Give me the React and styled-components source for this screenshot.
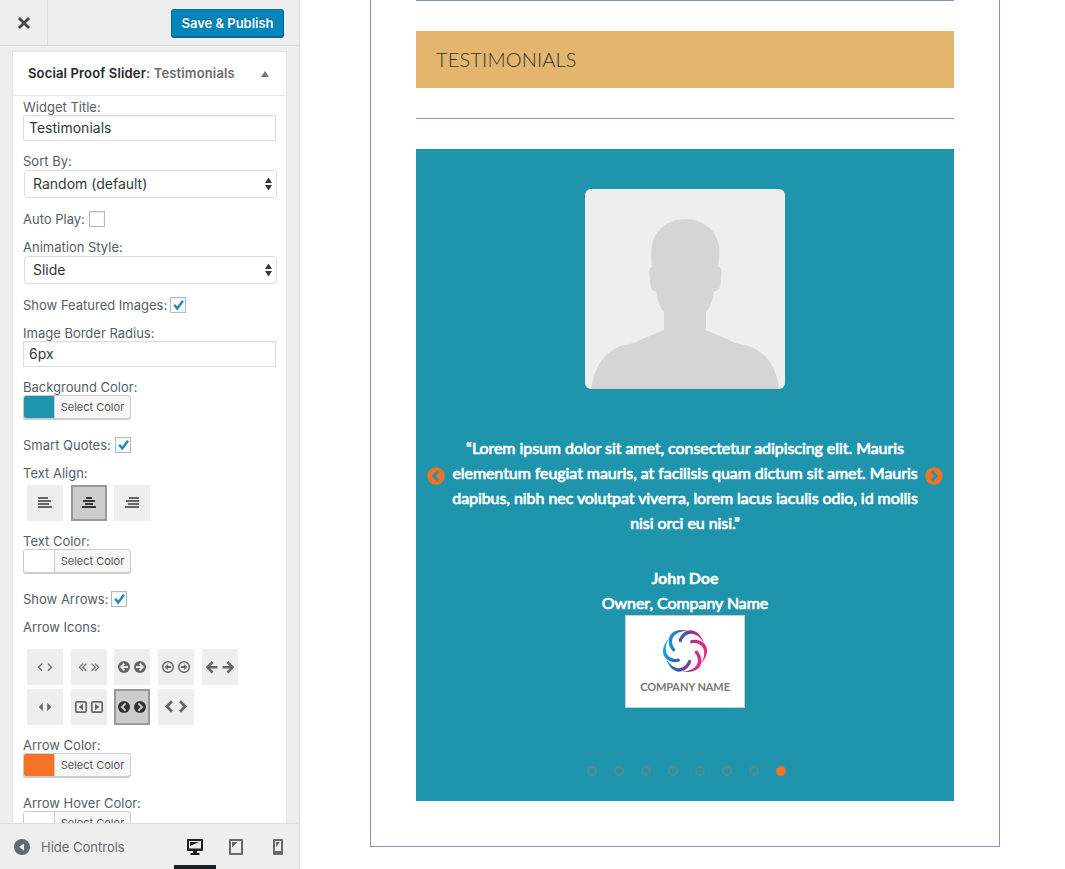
import React from "react";
import styled, { createGlobalStyle, css } from "styled-components";

const Global = createGlobalStyle`
  *, *::before, *::after { box-sizing: border-box; }
  html, body { margin: 0; padding: 0; background: #fff; overflow: hidden; }
  body { font-family: Inter, "Liberation Sans", sans-serif; font-size: 13px; color: #555d66; }
  button { font: inherit; margin: 0; padding: 0; }
`;

const Page = styled.div`
  display: flex;
  width: 1065px;
  height: 869px;
  overflow: hidden;
`;

const Sidebar = styled.aside`
  display: flex;
  flex-direction: column;
  width: 300px;
  height: 869px;
  flex: none;
  background: #eee;
  border-right: 1px solid #ddd;
`;

const Header = styled.header`
  display: flex;
  align-items: center;
  justify-content: space-between;
  height: 46px;
  flex: none;
  border-bottom: 1px solid #ddd;
  padding-right: 15px;
`;

const CloseButton = styled.button`
  display: flex;
  align-items: center;
  justify-content: center;
  width: 48px;
  height: 45px;
  border: 0;
  border-right: 1px solid #ddd;
  background: #eee;
  color: #444;
`;

const SaveButton = styled.button`
  width: 113px;
  height: 29px;
  margin-top: 2px;
  padding-bottom: 1px;
  border: 1px solid #006799;
  border-top-color: #0073aa;
  border-radius: 3px;
  box-shadow: inset 0 -1px 0 #006799;
  background: #0085ba;
  color: #fff;
  font-size: 13px;
  font-weight: 600;
  letter-spacing: -0.03px;
  white-space: nowrap;
  text-shadow: 0 -1px 1px #006799;
`;

const Scroll = styled.div`
  flex: 1;
  min-height: 0;
  overflow: hidden;
  padding: 5px 12px 0;
`;

const Widget = styled.section`
  width: 275px;
  height: 900px;
  background: #fff;
  border: 1px solid #e5e5e5;
`;

const WidgetTitle = styled.h3`
  display: flex;
  align-items: center;
  justify-content: space-between;
  height: 44px;
  margin: 0;
  padding: 0 17px 0 15px;
  border-bottom: 1px solid #e5e5e5;
  color: #23282d;
  font-size: 13px;
  font-weight: 600;
  letter-spacing: 0.15px;
  white-space: nowrap;
  div { padding-bottom: 2px; }
  span { color: #6b6b6b; }
`;

const Fields = styled.div`
  padding: 3px 10px 0;
`;

const Field = styled.div`
  margin-bottom: ${(p) => p.$gap ?? 12}px;
`;

const Label = styled.label`
  display: block;
  height: 16px;
  line-height: 16px;
  white-space: nowrap;
`;

const TextInput = styled.div`
  width: 253px;
  height: 26px;
  padding-left: 5px;
  border: 1px solid #ddd;
  background: #fff;
  box-shadow: inset 0 1px 2px rgba(0, 0, 0, 0.05);
  color: #32373c;
  font-size: 14px;
  line-height: 24px;
`;

const Select = styled.div`
  display: flex;
  align-items: center;
  justify-content: space-between;
  width: 253px;
  height: 28px;
  margin: 1px 0 0 1px;
  padding: 0 4px 0 8px;
  border: 1px solid #ddd;
  border-radius: 4px;
  background: #fff;
  color: #32373c;
  font-size: 14px;
  line-height: 24px;
`;

const CheckRow = styled.div`
  display: flex;
  align-items: center;
  gap: ${(p) => p.$space ?? 4}px;
  height: 16px;
  margin-bottom: 12px;
  white-space: nowrap;
`;

const CheckBox = styled.span`
  display: flex;
  width: 16px;
  height: 16px;
  border: 1px solid #b4b9be;
  background: #fff;
  box-shadow: inset 0 1px 2px rgba(0, 0, 0, 0.08);
`;

const ColorButton = styled.button`
  display: flex;
  width: 108px;
  height: 24px;
  border: 1px solid #ccc;
  border-radius: 3px;
  box-shadow: 0 1px 0 #ccc;
  background: #f7f7f7;
  overflow: hidden;
`;

const Swatch = styled.span`
  flex: none;
  width: 30px;
  height: 22px;
  background: ${(p) => p.$color};
`;

const ColorText = styled.span`
  flex: 1;
  height: 22px;
  border-left: 1px solid #ccc;
  color: #555;
  font-size: 11px;
  line-height: 22px;
  text-align: center;
  white-space: nowrap;
`;

const Tiles = styled.div`
  display: flex;
  flex-wrap: wrap;
  gap: 4px 7.7px;
  padding: ${(p) => p.$top}px 0 0 4px;
`;

const Tile = styled.button`
  display: flex;
  align-items: center;
  justify-content: center;
  width: 36px;
  height: 36px;
  border: 0;
  background: #eee;
  color: #666;
  ${(p) => p.$active && css`
    border: 2px solid #999;
    background: #ccc;
    color: #333;
  `}
  svg { flex: none; }
`;

const Footer = styled.footer`
  display: flex;
  align-items: center;
  height: 46px;
  flex: none;
  border-top: 1px solid #ddd;
  padding-left: 14px;
  color: #656a6f;
`;

const HideText = styled.span`
  flex: 1;
  margin-left: 11px;
  white-space: nowrap;
`;

const Device = styled.button`
  display: flex;
  align-items: center;
  justify-content: center;
  width: ${(p) => p.$width ?? 42}px;
  height: 45px;
  border: 0;
  background: none;
  box-shadow: ${(p) => (p.$active ? "inset 0 -4px 0 #191e23" : "none")};
  color: ${(p) => (p.$active ? "#191e23" : "#656a6f")};
`;

const TabletDevice = styled(Device)`
  padding-right: 1px;
`;

const Main = styled.main`
  flex: 1;
  padding-left: 70px;
`;

const Frame = styled.div`
  width: 630px;
  height: 847px;
  padding: 0 45px;
  border: 1px solid #8494b4;
  border-top: 0;
`;

const Rule = styled.div`
  height: 1px;
  background: #8494b4;
`;

const Banner = styled.h2`
  height: 57px;
  margin: 30px 0;
  padding-left: 20px;
  background: #e3b56d;
  color: #333;
  font-family: Lato, sans-serif;
  font-size: 20px;
  font-weight: 300;
  line-height: 56px;
  letter-spacing: 0.15px;
`;

const Slider = styled.section`
  display: flex;
  flex-direction: column;
  align-items: center;
  height: 652px;
  margin-top: 30px;
  padding-top: 40px;
  background: #1f95ad;
  color: #fff;
  font-family: Lato, sans-serif;
`;

const Avatar = styled.div`
  width: 200px;
  height: 200px;
  border-radius: 6px;
  background: #eee;
  overflow: hidden;
  svg { display: block; }
`;

const QuoteRow = styled.div`
  display: flex;
  justify-content: space-between;
  align-items: center;
  width: 516px;
  margin-top: 46px;
`;

const Arrow = styled.span`
  display: flex;
  width: 18px;
  margin-top: -18px;
`;

const Quote = styled.p`
  margin: 0;
  font-size: 16px;
  line-height: 25px;
  letter-spacing: -0.06px;
  text-align: center;
  white-space: nowrap;
  -webkit-text-stroke: 0.7px #fff;
`;

const Line = styled.span`
  display: block;
`;

const Name = styled(Line)`
  font-weight: 700;
  letter-spacing: -0.1px;
  -webkit-text-stroke-width: 0.4px;
`;

const Author = styled(Quote)`
  margin-top: 30px;
`;

const Logo = styled.div`
  display: flex;
  flex-direction: column;
  align-items: center;
  width: 120px;
  height: 93px;
  padding-top: 12px;
  border: 1px solid #ccc;
  background: #fff;
`;

const LogoText = styled.span`
  margin-top: 6px;
  color: #77787a;
  font-family: Lato, sans-serif;
  font-size: 11px;
  font-weight: 700;
  line-height: 14px;
  letter-spacing: -0.1px;
  white-space: nowrap;
`;

const Dots = styled.div`
  display: flex;
  gap: 17px;
  margin-top: 58px;
  padding-left: 3px;
`;

const Dot = styled.span`
  width: 10px;
  height: 10px;
  border: 2px solid ${(p) => (p.$active ? "#f37226" : "#578a8c")};
  border-radius: 50%;
  background: ${(p) => (p.$active ? "#f37226" : "transparent")};
`;

const Check = () => (
  <svg width="14" height="14" viewBox="0 0 14 14" fill="none">
    <path d="M3.2 6.8 L6.2 10.4 L12 2.8" stroke="#1e8cbe" strokeWidth="2.5" />
  </svg>
);

const UpDown = () => (
  <svg width="7" height="14" viewBox="0 0 7 14" fill="#32373c">
    <path d="M3.5 0.5 L7 6 H0Z M3.5 13.5 L7 8 H0Z" />
  </svg>
);

const AlignIcon = ({ kind }) => {
  const widths = [10, 13, 11, 14];
  const centered = [6, 12, 8, 14];
  return (
    <svg width="14" height="12" viewBox="0 0 14 12" fill="currentColor">
      {widths.map((w, i) => {
        const width = kind === "center" ? centered[i] : w;
        const x = kind === "left" ? 0 : kind === "right" ? 14 - width : (14 - width) / 2;
        return <rect key={i} x={x} y={i * 3} width={width} height="2" rx="0.3" />;
      })}
    </svg>
  );
};

const glyphs = {
  angle: <path d="M9.6 14.6 L6 18.2 L9.6 21.8" strokeWidth="1.3" />,
  doubleAngle: <path d="M12.6 14.6 L9 18.2 L12.6 21.8 M16 14.6 L12.4 18.2 L16 21.8" strokeWidth="1.2" />,
  circleArrow: (
    <>
      <circle cx="10" cy="18" r="6" fill="currentColor" stroke="none" />
      <path d="M10.4 14.6 L7 18 L10.4 21.4 M7.2 18 H14" stroke="#eee" strokeWidth="1.8" />
    </>
  ),
  circleArrowOutline: (
    <>
      <circle cx="10" cy="18" r="5.3" strokeWidth="1.5" />
      <path d="M13 17.1 H9.8 V15 L6.6 18 L9.8 21 V18.9 H13Z" fill="currentColor" stroke="none" />
    </>
  ),
  arrow: <path d="M11.5 13 L6.3 18.3 L11.5 23.6 M6.6 18.3 H16.3" strokeWidth="2.6" />,
  caret: <path d="M10 13.8 V22.2 L6 18Z" fill="currentColor" stroke="none" />,
  squareCaret: (
    <>
      <rect x="4.8" y="12.8" width="10.4" height="10.4" rx="1.4" strokeWidth="1.7" />
      <path d="M12 14.8 V21.2 L7.6 18Z" fill="currentColor" stroke="none" />
    </>
  ),
  circleChevron: (
    <>
      <circle cx="10" cy="18" r="6" fill="currentColor" stroke="none" />
      <path d="M11.6 14.4 L8 18 L11.6 21.6" stroke="#ccc" strokeWidth="2" />
    </>
  ),
  chevron: <path d="M14 12.2 L8.8 17.5 L14 22.8" strokeWidth="2.7" />,
};

const shift = { angle: 5.5, doubleAngle: -0.6, caret: 5.8, arrow: -0.9 };
const middle = { chevron: 18 };

const PairIcon = ({ name }) => (
  <svg width="36" height="36" viewBox="0 0 36 36" fill="none" stroke="currentColor">
    <g transform={`translate(${shift[name] ?? 0} 0)`}>{glyphs[name]}</g>
    <g transform={`translate(${2 * (middle[name] ?? 18) - (shift[name] ?? 0)} 0) scale(-1 1)`}>{glyphs[name]}</g>
  </svg>
);

const CircleChevron = ({ flip }) => (
  <svg width="18" height="18" viewBox="0 0 18 18" fill="none">
    <circle cx="9" cy="9" r="8.7" fill="#f37226" />
    <path d={flip ? "M6.8 4.4 L11.4 9 L6.8 13.6" : "M11.2 4.4 L6.6 9 L11.2 13.6"} stroke="#1f95ad" strokeWidth="2.8" />
  </svg>
);

const Person = () => (
  <svg width="200" height="200" viewBox="0 0 200 200" fill="#d5d5d5">
    <path d="M6.5 200 C9 178 20 161 39 156 C46 155 50 154 55 151 L79 141 V123 C74 117 72 110 71 102 C66 103 65 97 65 90 C64 82 64 78 67 78 C66 68 66 62 67 56 C70 41 83 30 100 30 C118 30 131 41 134 56 C135 62 134 70 133 78 C137 78 137 82 136 90 C136 97 134 103 129 102 C128 110 126 117 121 123 V141 L144 151 C149 154 154 155 160 156 C180 161 192 178 194 200Z" />
  </svg>
);

const Swirl = () => (
  <svg width="46" height="46" viewBox="-24 -24 48 48">
    <defs>
      <linearGradient id="swirl-fill" gradientUnits="userSpaceOnUse" x1="-22" y1="-3" x2="21" y2="3">
        <stop offset="0" stopColor="#12a9e4" />
        <stop offset="0.3" stopColor="#2a6db3" />
        <stop offset="0.58" stopColor="#7b3d99" />
        <stop offset="0.85" stopColor="#dd2a88" />
        <stop offset="1" stopColor="#ee2583" />
      </linearGradient>
      <clipPath id="swirl-arms">
        {[0, 60, 120, 180, 240, 300].map((angle) => (
          <path
            key={angle}
            transform={`rotate(${angle})`}
            d="M-10.2 -1.8 C-14 -6 -14.3 -11.5 -12 -15 C-9 -19 -4 -21 3 -21.2 C-6 -23 -12 -21 -15.2 -16.8 C-18.6 -11.5 -17.4 -4.8 -12.9 0.2 A1.8 1.8 0 0 0 -10.2 -1.8Z"
          />
        ))}
      </clipPath>
    </defs>
    <rect x="-23" y="-23" width="46" height="46" fill="url(#swirl-fill)" clipPath="url(#swirl-arms)" />
  </svg>
);

const ColorField = ({ label, color }) => (
  <Field $gap={18}>
    <Label>{label}</Label>
    <ColorButton>
      <Swatch $color={color} />
      <ColorText>Select Color</ColorText>
    </ColorButton>
  </Field>
);

const CheckField = ({ label, checked, space }) => (
  <CheckRow $space={space}>
    {label}
    <CheckBox>{checked && <Check />}</CheckBox>
  </CheckRow>
);

const arrowNames = ["angle", "doubleAngle", "circleArrow", "circleArrowOutline", "arrow", "caret", "squareCaret", "circleChevron", "chevron"];

export default function App() {
  return (
    <Page>
      <Global />
      <Sidebar>
        <Header>
          <CloseButton aria-label="Close">
            <svg width="12" height="12" viewBox="0 0 12 12" stroke="currentColor" strokeWidth="2.8">
              <path d="M1 1 L11 11 M11 1 L1 11" />
            </svg>
          </CloseButton>
          <SaveButton>Save &amp; Publish</SaveButton>
        </Header>
        <Scroll>
          <Widget>
            <WidgetTitle>
              <div>Social Proof Slider<span>: Testimonials</span></div>
              <svg width="8" height="6" viewBox="0 0 8 6" fill="#72777c"><path d="M4 0 L8 6 H0Z" /></svg>
            </WidgetTitle>
            <Fields>
              <Field>
                <Label>Widget Title:</Label>
                <TextInput>Testimonials</TextInput>
              </Field>
              <Field $gap={13}>
                <Label>Sort By:</Label>
                <Select><span>Random (default)</span><UpDown /></Select>
              </Field>
              <CheckField label="Auto Play:" />
              <Field $gap={13}>
                <Label>Animation Style:</Label>
                <Select><span>Slide</span><UpDown /></Select>
              </Field>
              <CheckField label="Show Featured Images:" checked space={3} />
              <Field>
                <Label>Image Border Radius:</Label>
                <TextInput>6px</TextInput>
              </Field>
              <ColorField label="Background Color:" color="#1f95ad" />
              <CheckField label="Smart Quotes:" checked />
              <Field>
                <Label>Text Align:</Label>
                <Tiles $top={4}>
                  {["left", "center", "right"].map((kind) => (
                    <Tile key={kind} $active={kind === "center"}><AlignIcon kind={kind} /></Tile>
                  ))}
                </Tiles>
              </Field>
              <ColorField label="Text Color:" color="#fff" />
              <CheckField label="Show Arrows:" checked space={3} />
              <Field>
                <Label>Arrow Icons:</Label>
                <Tiles $top={14}>
                  {arrowNames.map((name) => (
                    <Tile key={name} $active={name === "circleChevron"}><PairIcon name={name} /></Tile>
                  ))}
                </Tiles>
              </Field>
              <ColorField label="Arrow Color:" color="#f37226" />
              <ColorField label="Arrow Hover Color:" color="#fff" />
            </Fields>
          </Widget>
        </Scroll>
        <Footer>
          <svg width="16" height="16" viewBox="0 0 16 16">
            <circle cx="8" cy="8" r="8" fill="currentColor" />
            <path d="M10 4.4 V11.6 L5 8Z" fill="#eee" />
          </svg>
          <HideText>Hide Controls</HideText>
          <Device $active aria-label="Desktop">
            <svg width="16" height="16" viewBox="0 0 16 16" fill="currentColor">
              <path fillRule="evenodd" d="M1 0 H15 Q16 0 16 1 V11 Q16 12 15 12 H10 V14 H12.5 V16 H3.5 V14 H6 V12 H1 Q0 12 0 11 V1 Q0 0 1 0Z M2 2 V9.5 H14 V2Z" />
              <path d="M3 3 H12 L3 7Z" />
            </svg>
          </Device>
          <TabletDevice $width={41} aria-label="Tablet">
            <svg width="14" height="16" viewBox="0 0 14 16" fill="currentColor">
              <path fillRule="evenodd" d="M1 0 H13 Q14 0 14 1 V15 Q14 16 13 16 H1 Q0 16 0 15 V1 Q0 0 1 0Z M2 2 V14 H12 V2Z" />
              <path d="M3 3 H8.5 L3 8.5Z" />
            </svg>
          </TabletDevice>
          <Device aria-label="Mobile">
            <svg width="10" height="16" viewBox="0 0 10 16" fill="currentColor">
              <path fillRule="evenodd" d="M1 0 H9 Q10 0 10 1 V15 Q10 16 9 16 H1 Q0 16 0 15 V1 Q0 0 1 0Z M2 2 V12 H8 V2Z" />
              <path d="M3 3 H7 L3 8Z" />
            </svg>
          </Device>
        </Footer>
      </Sidebar>
      <Main>
        <Frame>
          <Rule />
          <Banner>TESTIMONIALS</Banner>
          <Rule />
          <Slider>
            <Avatar><Person /></Avatar>
            <QuoteRow>
              <Arrow><CircleChevron /></Arrow>
              <Quote>
                <Line>“Lorem ipsum dolor sit amet, consectetur adipiscing elit. Mauris</Line>
                <Line>elementum feugiat mauris, at facilisis quam dictum sit amet. Mauris</Line>
                <Line>dapibus, nibh nec volutpat viverra, lorem lacus iaculis odio, id mollis</Line>
                <Line>nisi orci eu nisi.”</Line>
              </Quote>
              <Arrow><CircleChevron flip /></Arrow>
            </QuoteRow>
            <Author>
              <Name>John Doe</Name>
              <Line>Owner, Company Name</Line>
            </Author>
            <Logo>
              <Swirl />
              <LogoText>COMPANY NAME</LogoText>
            </Logo>
            <Dots>
              {Array.from({ length: 8 }, (_, i) => <Dot key={i} $active={i === 7} />)}
            </Dots>
          </Slider>
        </Frame>
      </Main>
    </Page>
  );
}
